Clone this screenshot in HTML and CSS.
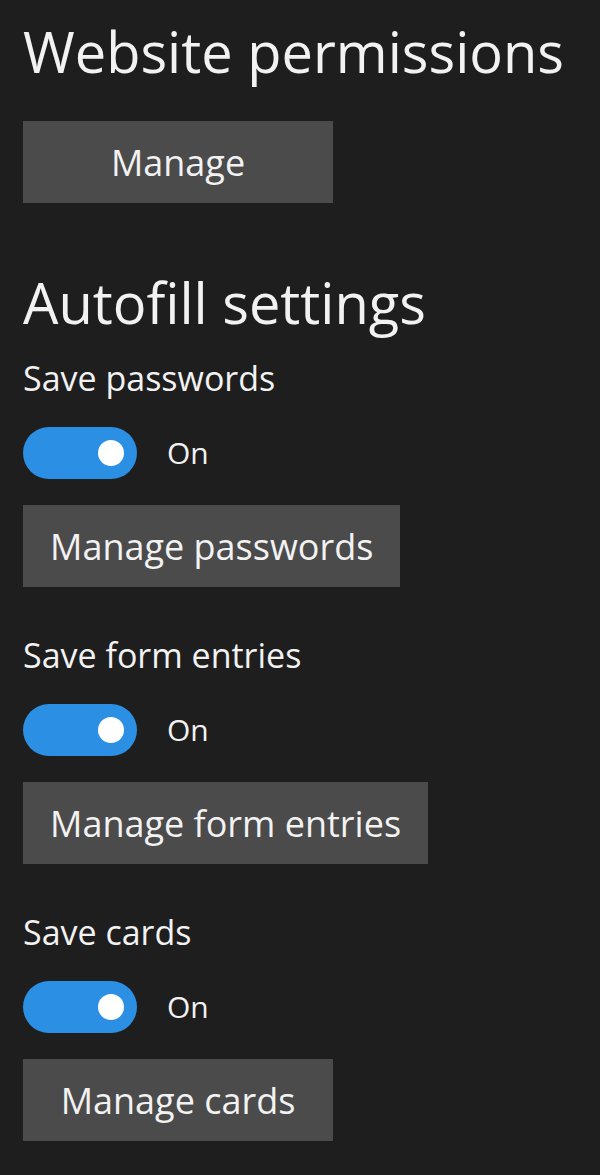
FILE: index.html
```html
<!DOCTYPE html>
<html lang="en">
<head>
<meta charset="utf-8">
<link rel="stylesheet" href="styles.css">
</head>
<body>
<main class="page">
  <h1 class="heading heading-first">Website permissions</h1>
  <button class="btn">Manage</button>

  <h1 class="heading heading-second">Autofill settings</h1>

  <section class="setting">
    <div class="label">Save passwords</div>
    <div class="toggle-row">
      <span class="toggle"><span class="knob"></span></span>
      <span class="state">On</span>
    </div>
    <button class="btn">Manage passwords</button>
  </section>

  <section class="setting">
    <div class="label">Save form entries</div>
    <div class="toggle-row">
      <span class="toggle"><span class="knob"></span></span>
      <span class="state">On</span>
    </div>
    <button class="btn">Manage form entries</button>
  </section>

  <section class="setting">
    <div class="label">Save cards</div>
    <div class="toggle-row">
      <span class="toggle"><span class="knob"></span></span>
      <span class="state">On</span>
    </div>
    <button class="btn">Manage cards</button>
  </section>
</main>
</body>
</html>
```
FILE: styles.css
```css
html, body {
  margin: 0;
  padding: 0;
  background: #1e1e1e;
}
body {
  font-family: "Open Sans", "Noto Sans", sans-serif;
  color: #f2f2f2;
}
.page {
  display: flex;
  flex-direction: column;
  align-items: flex-start;
  padding: 0 23px;
}
.heading {
  font-weight: 400;
  font-size: 56px;
  line-height: 64px;
  margin: 0;
}
.heading-first {
  margin-top: 19px;
  margin-bottom: 38px;
}
.heading-second {
  margin-top: 67px;
  margin-bottom: 24px;
}
.btn {
  font-family: inherit;
  background: #4b4b4b;
  color: #f2f2f2;
  border: none;
  border-radius: 0;
  height: 82px;
  min-width: 310px;
  padding: 0 27px;
  font-size: 36px;
  text-align: center;
}
.setting {
  display: flex;
  flex-direction: column;
  align-items: flex-start;
  margin-bottom: 48px;
}
.label {
  font-size: 34px;
  line-height: 40px;
}
.toggle-row {
  display: flex;
  align-items: center;
  gap: 30px;
  margin-top: 29px;
  margin-bottom: 26px;
}
.toggle {
  width: 114px;
  height: 52px;
  border-radius: 26px;
  background: #2b8fe4;
  display: flex;
  align-items: center;
  justify-content: flex-end;
  padding-right: 13px;
  box-sizing: border-box;
}
.knob {
  width: 26px;
  height: 26px;
  border-radius: 50%;
  background: #fff;
}
.state {
  font-size: 30px;
  line-height: 40px;
}
```
